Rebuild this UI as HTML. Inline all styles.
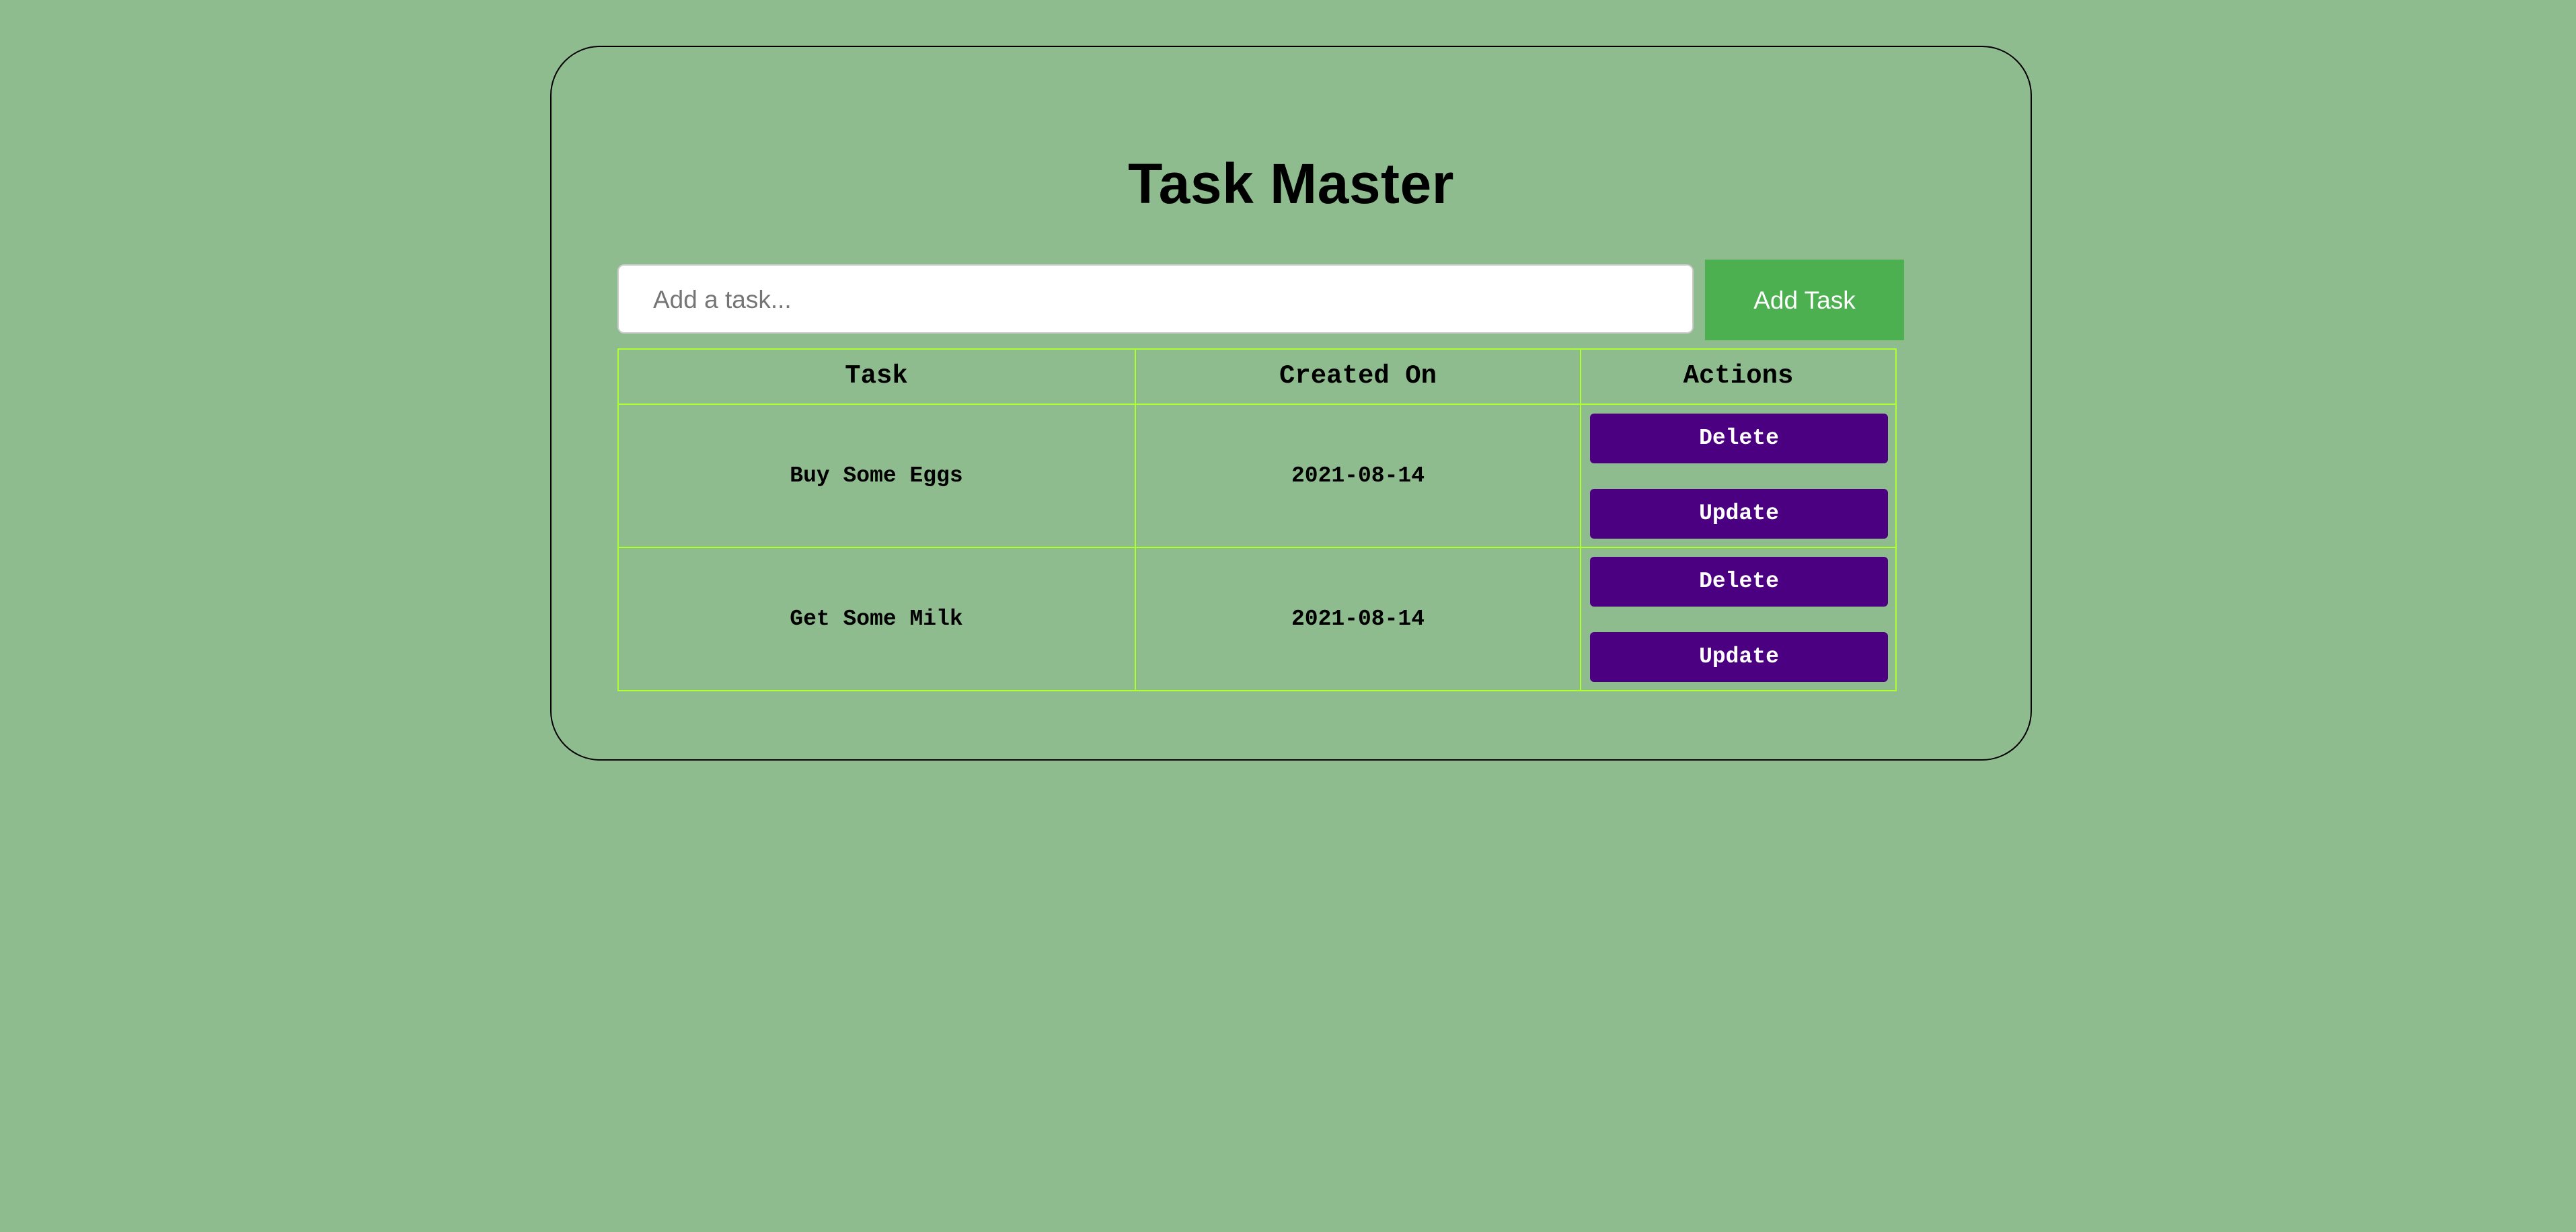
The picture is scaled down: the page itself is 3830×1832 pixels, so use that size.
<!DOCTYPE html>
<html><head><meta charset="utf-8"><style>
html,body{margin:0;padding:0;width:3830px;height:1832px;background:#8fbc8f;overflow:hidden}
.a{position:absolute;box-sizing:border-box}
.card{left:818px;top:68px;width:2203px;height:1063px;border:2px solid #000;border-radius:74px}
.title{left:818px;width:2203px;top:215px;text-align:center;font:bold 84px "Liberation Sans",sans-serif;color:#000;line-height:116px;letter-spacing:0.5px}
.inp{left:918px;top:393px;width:1600px;height:103px;background:#fff;border:2px solid #ccc;border-radius:10px;font:37px "Liberation Sans",sans-serif;color:#757575;padding-left:51px;line-height:101px}
.btn{left:2535px;top:386px;width:296px;height:120px;background:#4caf50;color:#fff;font:37px "Liberation Sans",sans-serif;text-align:center;line-height:122px}
.l{background:#adff2f}
.t{font:bold 33px "Liberation Mono",monospace;color:#000;text-align:center}
.h{font-size:39px}
.b{left:2364px;width:443px;height:74px;background:#4b0082;border-radius:6px;color:#fff;font:bold 33px "Liberation Mono",monospace;text-align:center;line-height:74px}
</style></head><body>
<div class="a card"></div>
<div class="a title">Task Master</div>
<div class="a inp">Add a task...</div>
<div class="a btn">Add Task</div>
<div class="a l" style="left:918px;top:518px;width:1902px;height:2px"></div>
<div class="a l" style="left:918px;top:600px;width:1902px;height:2px"></div>
<div class="a l" style="left:918px;top:813px;width:1902px;height:2px"></div>
<div class="a l" style="left:918px;top:1026px;width:1902px;height:2px"></div>
<div class="a l" style="left:918px;top:518px;width:2px;height:510px"></div>
<div class="a l" style="left:1687px;top:518px;width:2px;height:510px"></div>
<div class="a l" style="left:2349px;top:518px;width:2px;height:510px"></div>
<div class="a l" style="left:2818px;top:518px;width:2px;height:510px"></div>
<div class="a t h" style="left:918px;width:770px;top:535px;line-height:48px">Task</div>
<div class="a t h" style="left:1688px;width:662px;top:535px;line-height:48px">Created On</div>
<div class="a t h" style="left:2350px;width:469px;top:535px;line-height:48px">Actions</div>
<div class="a t" style="left:918px;width:770px;top:684px;line-height:48px">Buy Some Eggs</div>
<div class="a t" style="left:1688px;width:662px;top:684px;line-height:48px">2021-08-14</div>
<div class="a t" style="left:918px;width:770px;top:897px;line-height:48px">Get Some Milk</div>
<div class="a t" style="left:1688px;width:662px;top:897px;line-height:48px">2021-08-14</div>
<div class="a b" style="top:615px">Delete</div>
<div class="a b" style="top:727px">Update</div>
<div class="a b" style="top:828px">Delete</div>
<div class="a b" style="top:940px">Update</div>
</body></html>
